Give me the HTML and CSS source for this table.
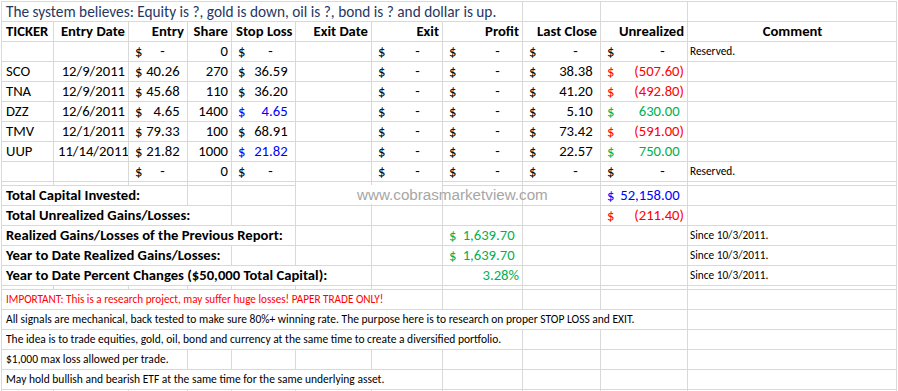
FILE: index.html
```html
<!DOCTYPE html>
<html>
<head>
<meta charset="utf-8">
<link rel="stylesheet" href="styles.css">
</head>
<body>
<div class="sheet">
  <!-- title -->
  <div class="c title s8">The system believes: Equity is ?, gold is down, oil is ?, bond is ? and dollar is up.</div>
  <div class="c"></div><div class="c"></div><div class="c"></div>
  <!-- header -->
  <div class="c hd">TICKER</div>
  <div class="c hd r">Entry Date</div>
  <div class="c hd r">Entry</div>
  <div class="c hd r">Share</div>
  <div class="c hd r">Stop Loss</div>
  <div class="c hd r">Exit Date</div>
  <div class="c hd r">Exit</div>
  <div class="c hd r">Profit</div>
  <div class="c hd r">Last Close</div>
  <div class="c hd r">Unrealized</div>
  <div class="c hd ctr">Comment</div>
  <!-- empty reserved row -->
  <div class="c"></div><div class="c"></div>
  <div class="c m"><span>$</span><span class="z">-</span></div>
  <div class="c r">0</div>
  <div class="c m"><span>$</span><span class="z">-</span></div>
  <div class="c"></div>
  <div class="c m"><span>$</span><span class="z">-</span></div>
  <div class="c m"><span>$</span><span class="z">-</span></div>
  <div class="c m"><span>$</span><span class="z">-</span></div>
  <div class="c m"><span>$</span><span class="z">-</span></div>
  <div class="c note">Reserved.</div>
  <!-- SCO -->
  <div class="c">SCO</div>
  <div class="c r">12/9/2011</div>
  <div class="c m"><span>$</span><span class="p">40.26</span></div>
  <div class="c r">270</div>
  <div class="c m"><span>$</span><span class="p">36.59</span></div>
  <div class="c"></div>
  <div class="c m"><span>$</span><span class="z">-</span></div>
  <div class="c m"><span>$</span><span class="z">-</span></div>
  <div class="c m"><span>$</span><span class="p">38.38</span></div>
  <div class="c m red"><span>$</span><span>(507.60)</span></div>
  <div class="c"></div>
  <!-- TNA -->
  <div class="c">TNA</div>
  <div class="c r">12/9/2011</div>
  <div class="c m"><span>$</span><span class="p">45.68</span></div>
  <div class="c r">110</div>
  <div class="c m"><span>$</span><span class="p">36.20</span></div>
  <div class="c"></div>
  <div class="c m"><span>$</span><span class="z">-</span></div>
  <div class="c m"><span>$</span><span class="z">-</span></div>
  <div class="c m"><span>$</span><span class="p">41.20</span></div>
  <div class="c m red"><span>$</span><span>(492.80)</span></div>
  <div class="c"></div>
  <!-- DZZ -->
  <div class="c">DZZ</div>
  <div class="c r">12/6/2011</div>
  <div class="c m"><span>$</span><span class="p">4.65</span></div>
  <div class="c r">1400</div>
  <div class="c m blue"><span>$</span><span class="p">4.65</span></div>
  <div class="c"></div>
  <div class="c m"><span>$</span><span class="z">-</span></div>
  <div class="c m"><span>$</span><span class="z">-</span></div>
  <div class="c m"><span>$</span><span class="p">5.10</span></div>
  <div class="c m green"><span>$</span><span class="p">630.00</span></div>
  <div class="c"></div>
  <!-- TMV -->
  <div class="c">TMV</div>
  <div class="c r">12/1/2011</div>
  <div class="c m"><span>$</span><span class="p">79.33</span></div>
  <div class="c r">100</div>
  <div class="c m"><span>$</span><span class="p">68.91</span></div>
  <div class="c"></div>
  <div class="c m"><span>$</span><span class="z">-</span></div>
  <div class="c m"><span>$</span><span class="z">-</span></div>
  <div class="c m"><span>$</span><span class="p">73.42</span></div>
  <div class="c m red"><span>$</span><span>(591.00)</span></div>
  <div class="c"></div>
  <!-- UUP -->
  <div class="c">UUP</div>
  <div class="c r">11/14/2011</div>
  <div class="c m"><span>$</span><span class="p">21.82</span></div>
  <div class="c r">1000</div>
  <div class="c m blue"><span>$</span><span class="p">21.82</span></div>
  <div class="c"></div>
  <div class="c m"><span>$</span><span class="z">-</span></div>
  <div class="c m"><span>$</span><span class="z">-</span></div>
  <div class="c m"><span>$</span><span class="p">22.57</span></div>
  <div class="c m green"><span>$</span><span class="p">750.00</span></div>
  <div class="c"></div>
  <!-- empty reserved row -->
  <div class="c"></div><div class="c"></div>
  <div class="c m"><span>$</span><span class="z">-</span></div>
  <div class="c r">0</div>
  <div class="c m"><span>$</span><span class="z">-</span></div>
  <div class="c"></div>
  <div class="c m"><span>$</span><span class="z">-</span></div>
  <div class="c m"><span>$</span><span class="z">-</span></div>
  <div class="c m"><span>$</span><span class="z">-</span></div>
  <div class="c m"><span>$</span><span class="z">-</span></div>
  <div class="c note">Reserved.</div>
  <!-- thin separator -->
  <div class="c thin"></div><div class="c thin"></div><div class="c thin"></div><div class="c thin"></div>
  <div class="c thin"></div><div class="c thin"></div><div class="c thin"></div><div class="c thin"></div>
  <div class="c thin"></div><div class="c thin"></div><div class="c thin"></div>
  <!-- summary -->
  <div class="c hd s3">Total Capital Invested:</div>
  <div class="c"></div><div class="c"></div><div class="c"></div><div class="c"></div><div class="c"></div><div class="c"></div>
  <div class="c m blue"><span>$</span><span class="p">52,158.00</span></div>
  <div class="c"></div>

  <div class="c hd s4">Total Unrealized Gains/Losses:</div>
  <div class="c"></div><div class="c"></div><div class="c"></div><div class="c"></div><div class="c"></div>
  <div class="c m red"><span>$</span><span>(211.40)</span></div>
  <div class="c"></div>

  <div class="c hd s5">Realized Gains/Losses of the Previous Report:</div>
  <div class="c"></div><div class="c"></div>
  <div class="c m green"><span>$</span><span class="p">1,639.70</span></div>
  <div class="c"></div><div class="c"></div>
  <div class="c note">Since 10/3/2011.</div>

  <div class="c hd s4">Year to Date Realized Gains/Losses:</div>
  <div class="c"></div><div class="c"></div><div class="c"></div>
  <div class="c m green"><span>$</span><span class="p">1,639.70</span></div>
  <div class="c"></div><div class="c"></div>
  <div class="c note">Since 10/3/2011.</div>

  <div class="c hd s6">Year to Date Percent Changes ($50,000 Total Capital):</div>
  <div class="c"></div>
  <div class="c r green">3.28%</div>
  <div class="c"></div><div class="c"></div>
  <div class="c note">Since 10/3/2011.</div>
  <!-- thin separator -->
  <div class="c thin"></div><div class="c thin"></div><div class="c thin"></div><div class="c thin"></div>
  <div class="c thin"></div><div class="c thin"></div><div class="c thin"></div><div class="c thin"></div>
  <div class="c thin"></div><div class="c thin"></div><div class="c thin"></div>
  <!-- notes -->
  <div class="c txt warn s7">IMPORTANT: This is a research project, may suffer huge losses! PAPER TRADE ONLY!</div>
  <div class="c"></div><div class="c"></div><div class="c"></div><div class="c"></div>

  <div class="c txt s10">All signals are mechanical, back tested to make sure 80%+ winning rate. The purpose here is to research on proper STOP LOSS and EXIT.</div>
  <div class="c"></div>

  <div class="c txt s8">The idea is to trade equities, gold, oil, bond and currency at the same time to create a diversified portfolio.</div>
  <div class="c"></div><div class="c"></div><div class="c"></div>

  <div class="c txt s3">$1,000 max loss allowed per trade.</div>
  <div class="c"></div><div class="c"></div><div class="c"></div><div class="c"></div>
  <div class="c"></div><div class="c"></div><div class="c"></div><div class="c"></div>

  <div class="c txt s7">May hold bullish and bearish ETF at the same time for the same underlying asset.</div>
  <div class="c"></div><div class="c"></div><div class="c"></div><div class="c"></div>

  <div class="c"></div><div class="c"></div><div class="c"></div><div class="c"></div>
  <div class="c"></div><div class="c"></div><div class="c"></div><div class="c"></div>
  <div class="c"></div><div class="c"></div><div class="c"></div>

  <div class="watermark">www.cobrasmarketview.com</div>
</div>
</body>
</html>
```
FILE: styles.css
```css
html, body {
  margin: 0;
  padding: 0;
  overflow: hidden;
  background: #fff;
}

body {
  font-family: Carlito, Calibri, Lato, "Liberation Sans", sans-serif;
  font-size: 14.67px;
  color: #000;
}

.sheet {
  position: relative;
  display: grid;
  grid-template-columns: 51px 74px 58px 43px 63px 75px 70px 79px 77px 86px 208px;
  gap: 1px;
  padding: 1px;
  margin: 1px 0 0 1px;
  width: max-content;
  background: #d9d9d9;
}

.c {
  background: #fff;
  height: 19px;
  line-height: 19px;
  padding: 0 3px 0 4px;
  white-space: nowrap;
  overflow: hidden;
}

.thin { height: 3px; }

.r { text-align: right; }
.ctr { text-align: center; }
.hd { font-weight: bold; }

.title {
  color: #1f3864;
  font-size: 15.3px;
}

.m {
  display: flex;
  justify-content: space-between;
  padding-left: 6px;
}
.m .p { padding-right: 0.3em; }
.m .z { padding-right: 1.31em; }

.red { color: #ff0000; }
.green { color: #00b050; }
.blue { color: #0000ff; }

.note {
  font-size: 11.3px;
  padding-left: 2px;
}

.txt {
  font-size: 11.5px;
}
.warn {
  color: #ff0000;
  font-size: 11.2px;
}

.s3 { grid-column: span 3; }
.s4 { grid-column: span 4; }
.s5 { grid-column: span 5; }
.s6 { grid-column: span 6; }
.s7 { grid-column: span 7; }
.s8 { grid-column: span 8; }
.s10 { grid-column: span 10; }

.watermark {
  position: absolute;
  left: 295px;
  top: 184px;
  width: 253px;
  height: 19px;
  line-height: 19px;
  padding-left: 61px;
  box-sizing: border-box;
  font-family: "Liberation Sans", Arial, sans-serif;
  font-size: 15.2px;
  color: #a6a6a6;
  background: linear-gradient(to right, #fff 0, #fff 146px, transparent 146px);
}
```
